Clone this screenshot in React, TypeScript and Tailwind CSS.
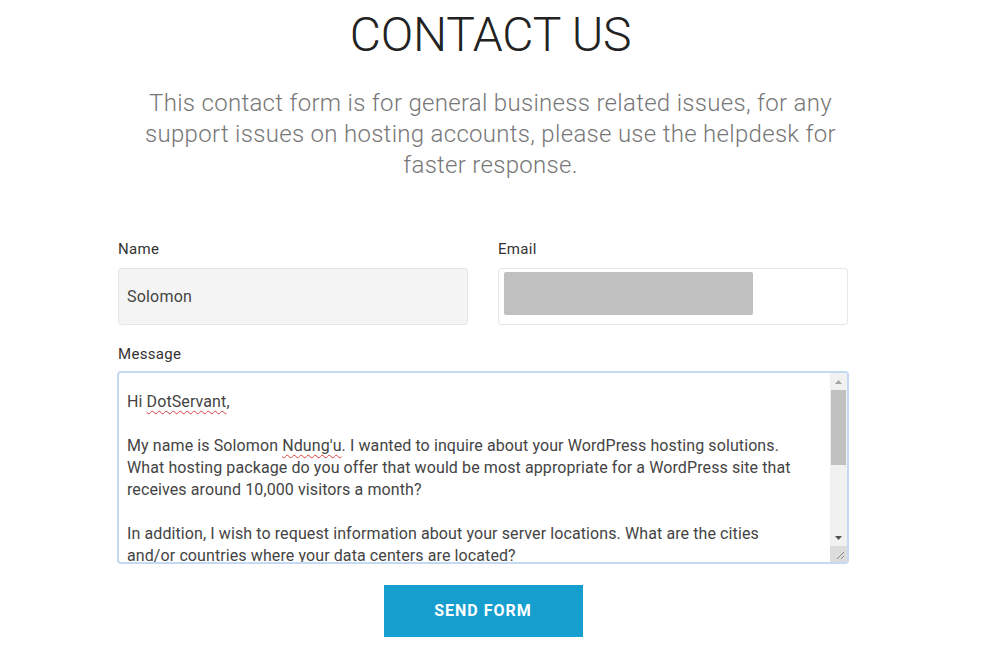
import React from "react"

const font = { fontFamily: "Roboto, 'Liberation Sans', sans-serif" }

function Label({ children, className = "mb-[9px]" }: { children: React.ReactNode; className?: string }) {
  return <div className={`text-[15px] text-[#333] leading-[20px] tracking-[0.3px] ${className}`}>{children}</div>
}

function Misspelt({ children }: { children: React.ReactNode }) {
  return (
    <span className="underline decoration-wavy decoration-[#e04040] decoration-1 underline-offset-[3px]">
      {children}
    </span>
  )
}

function Scrollbar() {
  return (
    <div className="w-[17px] flex flex-col bg-[#f1f1f1] shrink-0">
      <div className="h-[17px] flex items-center justify-center">
        <svg width="7" height="4" viewBox="0 0 7 4"><path d="M0 4 L3.5 0 L7 4Z" fill="#a3a3a3" /></svg>
      </div>
      <div className="mx-[1px] h-[75px] bg-[#c1c1c1]" />
      <div className="flex-1" />
      <div className="h-[17px] flex items-center justify-center">
        <svg width="7" height="4" viewBox="0 0 7 4"><path d="M0 0 L3.5 4 L7 0Z" fill="#505050" /></svg>
      </div>
      <div className="h-[16px] bg-[#dcdcdc] flex items-end justify-end p-[2px]">
        <svg width="9" height="9" viewBox="0 0 9 9">
          <path d="M1 8 L8 1 M5 8 L8 5" stroke="#888" strokeWidth="1" />
        </svg>
      </div>
    </div>
  )
}

export default function App() {
  return (
    <div className="w-[981px] h-[646px] bg-white overflow-hidden" style={font}>
      <div className="flex flex-col items-center pt-[8px]">
        <h1 className="text-[48px] font-light text-[#222] leading-[54px] tracking-[-0.2px]">CONTACT US</h1>
        <p className="mt-[26px] text-center text-[24px] font-light text-[#777] leading-[31px] tracking-[0.3px]">
          This contact form is for general business related issues, for any
          <br />
          support issues on hosting accounts, please use the helpdesk for
          <br />
          faster response.
        </p>
      </div>

      <div className="ml-[118px] mt-[58px] w-[730px]">
        <div className="grid grid-cols-2 gap-x-[30px]">
          <div>
            <Label>Name</Label>
            <div className="h-[57px] rounded-[3px] bg-[#f4f4f4] border border-[#e6e6e6] flex items-center px-[8px] text-[16px] text-[#444] tracking-[0.2px]">
              Solomon
            </div>
          </div>
          <div>
            <Label>Email</Label>
            <div className="h-[57px] rounded-[3px] bg-white border border-[#e6e6e6] flex items-start px-[5px] pt-[3px]">
              <div className="w-[249px] h-[43px] bg-[#c0c0c0] rounded-[2px]" />
            </div>
          </div>
        </div>

        <div className="mt-[19px]">
          <Label className="mb-[7px]">Message</Label>
          <div className="h-[193px] -ml-[1px] w-[732px] rounded-[4px] border-2 border-[#c3daf2] flex overflow-hidden">
            <div className="flex-1 px-[8px] pt-[18px] text-[16px] leading-[22px] text-[#444] tracking-[0.1px] overflow-hidden whitespace-nowrap">
              <p>
                Hi <Misspelt>DotServant</Misspelt>,
              </p>
              <p className="mt-[22px]">
                My name is Solomon <Misspelt>Ndung'u</Misspelt>. I wanted to inquire about your WordPress hosting solutions.
                <br />
                What hosting package do you offer that would be most appropriate for a WordPress site that
                <br />
                receives around 10,000 visitors a month?
              </p>
              <p className="mt-[22px]">
                In addition, I wish to request information about your server locations. What are the cities
                <br />
                and/or countries where your data centers are located?
              </p>
            </div>
            <Scrollbar />
          </div>
        </div>

        <div className="flex justify-center mt-[21px]">
          <button className="w-[199px] h-[52px] bg-[#169ecf] text-white font-bold text-[16px] tracking-[1px]">
            SEND FORM
          </button>
        </div>
      </div>
    </div>
  )
}
